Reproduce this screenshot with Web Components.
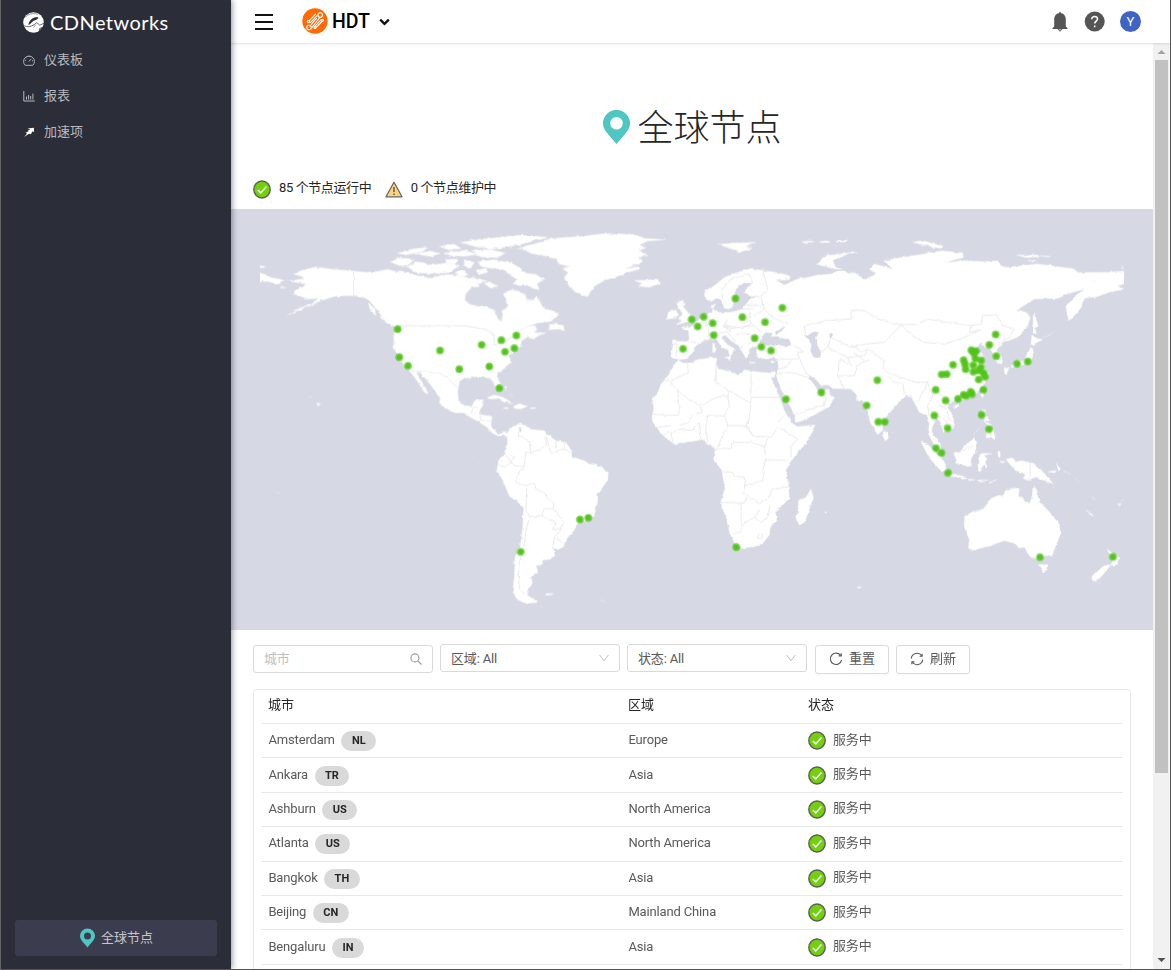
<!DOCTYPE html>
<html lang="zh-CN">
<head>
<meta charset="utf-8">
<title>全球节点</title>
<style>
html,body{margin:0;height:100%;overflow:hidden;background:#fff}
body{font:13px/20px Roboto,"Noto Sans CJK SC",sans-serif;color:#595959}
</style>
</head>
<body>
<cdn-app></cdn-app>
<script>
const define = (name, html, setup) => {
  const t = document.createElement('template');
  t.innerHTML = html;
  customElements.define(name, class extends HTMLElement {
    constructor() {
      super();
      this.attachShadow({mode: 'open'}).append(t.content.cloneNode(true));
    }
    connectedCallback() { if (setup) setup(this, this.shadowRoot); }
  });
};

const icons = {
  dash: '<svg viewBox="0 0 12 12" width="12" height="12" fill="none" stroke="currentColor" stroke-width=".95"><path d="M2.200 11.300A5.400 5.400 0 1 1 9.800 11.300Z"/><path d="M5.800 7.600L8.300 4.900M6 2v1M2 6.400h1M9 6.800h1M3.200 3.600l.7.7"/></svg>',
  chart: '<svg viewBox="0 0 12 12" width="12" height="12" fill="none" stroke="currentColor"><path d="M.8 1v10h11M3.500 9.500v-3M5.600 9.500V5M7.700 9.500V6M9.900 9.500V3.600"/></svg>',
  fast: '<svg viewBox="0 0 12 12" width="12" height="12" fill="#fff"><path d="M4.600 2.400L11 1.800 10.900 6.200 9.400 5.300 7.900 8.300 6.100 7.700 1 10.900 4 7.700 2.600 6.700 5.800 5.300 4.300 4.900 7.200 3.500Z"/></svg>',
  pin: '<svg viewBox="0 0 27 34" width="100%" height="100%" fill="#4ec7c2"><path fill-rule="evenodd" d="M13.500 0A13.300 13.300 0 0 0 0 13.500C0 20 6 25 13.500 34 21 25 27 20 27 13.500A13.300 13.300 0 0 0 13.500 0ZM13.500 7A6.300 6.300 0 1 1 13.500 19.600 6.300 6.300 0 0 1 13.500 7Z"/></svg>',
  ok: '<svg viewBox="0 0 18 19" width="18" height="19"><ellipse cx="9" cy="9.500" rx="8.200" ry="8.500" fill="#72d10c" stroke="#5b5f55" stroke-width="1.400"/><path d="M4.800 10l3 2.900 5.600-6.300" fill="none" stroke="#fff" stroke-width="1.500"/></svg>',
  warn: '<svg viewBox="0 0 18 17" width="18" height="17"><path d="M9 1.200L17 15.800H1Z" fill="#ffd27d" stroke="#666" stroke-width="1.300" stroke-linejoin="round"/><path d="M9 6v5M9 12.500v1.600" stroke="#555" stroke-width="1.400"/></svg>',
  search: '<svg viewBox="0 0 12 12" width="12" height="12" fill="none" stroke="#999" stroke-width="1.100"><circle cx="4.900" cy="4.900" r="4"/><path d="M7.800 7.800L11.500 11.500"/></svg>',
  down: '<svg viewBox="0 0 10 8" width="10" height="8" fill="none" stroke="#bfbfbf"><path d="M.6 1L5 6.800 9.400 1"/></svg>',
  reset: '<svg viewBox="0 0 14 14" width="14" height="14" fill="none" stroke="#555" stroke-width="1.150"><path d="M11.700 3.400A5.700 5.700 0 1 0 12.600 8.200"/><path d="M12.200 1.200v2.600h-2.600"/></svg>',
  reload: '<svg viewBox="0 0 14 14" width="14" height="14" fill="none" stroke="#555" stroke-width="1.150"><path d="M1.300 6.500A5.700 5.700 0 0 1 11.800 4M12.700 7.500A5.700 5.700 0 0 1 2.200 10"/><path d="M12.100 1.700v2.500h-2.500M1.900 12.300v-2.500h2.500"/></svg>'
};

define('ui-icon', '<style>:host{display:block;flex:none}svg{display:block}</style>', (el, root) => {
  if (root.querySelector('svg')) return;
  root.append(document.createRange().createContextualFragment(icons[el.getAttribute('name')]));
});

define('nav-item', `<style>
:host{display:flex;align-items:center;height:36px;padding-left:22px;color:#b9bac0}
ui-icon{width:12px;height:12px;margin-right:9px}
</style><ui-icon></ui-icon><span><slot></slot></span>`, (el, root) => {
  const i = root.querySelector('ui-icon');
  const n = document.createElement('ui-icon');
  n.setAttribute('name', el.getAttribute('icon'));
  i.replaceWith(n);
});

define('side-nav', `<style>
:host{display:flex;flex-direction:column;width:230px;box-sizing:border-box;background:#2b2d38;box-shadow:1px 0 6px rgba(0,21,41,.45);z-index:3}
.brand{display:flex;align-items:center;height:42px;padding:2px 0 0 22px;box-sizing:border-box;gap:6px;color:#fff;font:400 20px/24px Lato,sans-serif;letter-spacing:.45px}
.brand svg{width:21px;height:21px}
.fill{flex:1}
.global{display:flex;align-items:center;justify-content:center;height:36px;margin:0 14px 13px;border-radius:3px;background:#3b3d4f;color:#c5c6cc;gap:6px;padding-left:1px;box-sizing:border-box}
.global ui-icon{width:15px;height:20px}
</style>
<div class="brand"><svg viewBox="0 0 21 21"><circle cx="10.500" cy="10.500" r="10.300" fill="#fff"/><path d="M5.500 13.200C5.800 9 9.300 5.300 14.300 5.100L15.700 6.300C14.400 6.500 14.300 7.700 12.800 8 9.600 8.600 8.400 11.300 5.500 13.200Z" fill="#2b2d38"/><path d="M0 13C4.500 16 9 14.800 13.800 10.600L16.800 13.200 21 11.200" stroke="#2b2d38" stroke-width=".7" fill="none"/><path d="M2.200 5.500C5 1.800 10 .8 15 2.300M12.500 12.800L10.800 15.300" stroke="#2b2d38" stroke-width=".5" fill="none"/><path d="M15.800 16.800L19 14.800 21 15V21H15C15.900 19.500 16.200 18.300 15.800 16.800Z" fill="#2b2d38" opacity=".7"/></svg><span>CDNetworks</span></div>
<nav-item icon="dash">仪表板</nav-item>
<nav-item icon="chart">报表</nav-item>
<nav-item icon="fast">加速项</nav-item>
<div class="fill"></div>
<div class="global"><ui-icon name="pin"></ui-icon><span>全球节点</span></div>`);

define('top-bar', `<style>
:host{display:flex;align-items:center;height:43px;box-sizing:border-box;background:#fff;padding:0 29px 0 24px;box-shadow:0 1px 2px rgba(0,21,41,.13);z-index:2}
svg{display:block;flex:none}
.logo{margin:-1px 0 0 29px}
b{font:500 19.500px/24px Roboto,sans-serif;color:#000;margin:1px 9px 0 4px}
.fill{flex:1}
.help{margin:0 15px 0 16px}
.user{display:flex;align-items:center;justify-content:center;width:21px;height:21px;border-radius:50%;background:#4064c4;color:#fff;font-size:13px}
</style>
<svg width="18" height="16" viewBox="0 0 18 16"><path d="M0 1h18M0 8h18M0 15h18" stroke="#111" stroke-width="1.800"/></svg>
<svg class="logo" width="26" height="26" viewBox="0 0 26 26"><circle cx="13" cy="13" r="12.700" fill="#ff6a05"/><g stroke="#fff" stroke-width="1.100" fill="none" stroke-linecap="round"><path d="M7.200 12.800L13.500 6.200M8.700 14.300L15 7.700M10 19.300L17.500 10M8 18L14.500 10.300M13 18.200L19.200 11.700M14.300 19.300L20.500 13"/><circle cx="18.200" cy="7.100" r="2.300"/><circle cx="7" cy="19.500" r="2.200"/><circle cx="20.500" cy="12.200" r="1"/><circle cx="6.500" cy="13.600" r="1.100"/><circle cx="13" cy="19.500" r="1"/></g></svg>
<b>HDT</b>
<svg width="11" height="8" viewBox="0 0 11 8"><path d="M1.200 1.600L5.500 5.800 9.800 1.600" fill="none" stroke="#111" stroke-width="2.300"/></svg>
<div class="fill"></div>
<svg width="16" height="21" viewBox="0 0 16 21" fill="#555"><path d="M8 .5L9.200 2.200C12.500 2.800 13.800 5.500 13.800 8.500V15.500L15.600 17.200V18H.4V17.200L2.200 15.500V8.500C2.200 5.500 3.500 2.800 6.800 2.200ZM5.500 18h5L8 20.800Z"/><circle cx="8" cy="18.700" r=".7" fill="#fff"/></svg>
<svg class="help" width="21" height="21" viewBox="0 0 21 21"><circle cx="10.700" cy="10.500" r="10" fill="#555"/><path d="M7.800 8.300C7.700 4.600 13.700 4.700 13.500 8 13.400 10 10.700 10.200 10.700 12.600M10.700 14.500V16.200" stroke="#fff" stroke-width="1.600" fill="none"/></svg>
<div class="user">Y</div>`);

define('scroll-rail', `<style>
:host{display:flex;flex-direction:column;align-items:center;width:17px;background:#f1f1f1}
.thumb{width:13px;height:713px;background:#c1c1c1}.fill{flex:1}
svg{display:block}
</style>
<svg width="17" height="17"><path d="M4.500 11L8.500 7 12.500 11Z" fill="#a3a3a3"/></svg><div class="thumb"></div><div class="fill"></div>
<svg width="17" height="20"><path d="M4.500 9L8.500 13 12.500 9Z" fill="#505050"/></svg>`);

define('node-summary', `<style>
:host{display:flex;align-items:center;height:20px;padding:0 22px;color:#262626;letter-spacing:-.4px}
span{margin:0 13.500px 3px 8px}
ui-icon{margin-bottom:0}
</style><ui-icon name="ok"></ui-icon><span>85 个节点运行中</span><ui-icon name="warn"></ui-icon><span>0 个节点维护中</span>`);

/* Map coordinates: three units per CSS pixel, origin at the map's top-left corner. */
const pins = [[500,360],[505,444],[531,470],[627,424],[752,407],[811,393],[856,379],[850,417],[822,428],[775,472],[685,480],[805,537],
[1513,268],[1654,296],[1534,324],[1602,339],[1418,323],[1382,331],[1400,352],[1445,342],[1448,378],[1356,419],[1571,387],[1591,413],[1620,424],[1665,570],[1771,550],
[2294,376],[2275,407],[2296,441],[2358,464],[2390,457],[2221,423],[2235,426],[2228,432],[2198,453],[2202,465],[2204,480],[2233,448],[2250,454],[2227,468],[2250,475],[2227,488],[2243,484],[2258,492],[2262,503],[2243,511],[2166,467],[2132,496],[2147,495],[2114,542],[2144,574],[2257,542],[2181,569],[2198,557],[2206,560],[2219,548],[2223,555],[2110,619],[2252,617],[1939,513],[1907,589],[1942,638],[1961,638],
[2150,657],[2274,660],[2115,717],[2131,731],[2151,791],[1516,1014],[2427,1044],[2646,1043],[1047,931],[1072,926],[869,1028]];

define('world-map', `<style>
:host{display:block;height:421px;background:#d6d8e4}
svg{display:block;width:922px;height:421px}
.land{fill:#fff;stroke:#f4f4f6;stroke-width:1.500;stroke-linejoin:round}
.sea{fill:#d6d8e4}
.line{fill:none;stroke:#e8e8ec;stroke-width:2.700;stroke-linejoin:round}
</style>
<svg viewBox="0 0 2766 1263">
<defs><filter id="coast" x="0" y="0" width="2766" height="1263" filterUnits="userSpaceOnUse" color-interpolation-filters="sRGB"><feTurbulence type="fractalNoise" baseFrequency=".06" numOctaves="2" seed="4"/><feDisplacementMap in="SourceGraphic" scale="9" xChannelSelector="R" yChannelSelector="G"/></filter>
<clipPath id="world"><path d="M88 0H2678V1263H88Z"/></clipPath></defs>
<g clip-path="url(#world)"><g filter="url(#coast)">
<g class="land">
<path d="M80 190L103 196 120 206 160 213 145 220 150 226 110 218 95 216 80 223Z M80 170l22 2-3 4-19 0ZM148 233l18 2-3 3-15-3Z"/>
<path d="M185 194L215 183 255 174 300 180 368 186 405 190 440 187 470 181 490 186 530 192 560 200 600 208 640 196 690 200 720 210 740 222 745 232 725 236 712 245 702 262 703 275 715 285 740 292 770 296 790 304 796 318 803 333 812 333 816 318 812 305 822 300 832 290 825 270 820 250 840 243 862 246 880 258 890 275 908 272 915 258 930 285 945 300 972 308 980 320 960 337 920 342 888 352 872 366 890 352 912 350 918 362 908 370 945 372 925 378 905 392 890 382 870 398 872 410 850 425 835 440 838 460 820 478 800 490 798 505 812 530 810 548 797 542 787 518 775 508 740 502 715 508 700 506 685 520 680 545 682 575 700 590 722 594 730 575 757 572 755 590 745 605 748 617 783 622 780 645 782 655 795 670 805 674 820 667 832 678 826 684 818 676 805 682 785 673 768 655 740 636 718 625 700 612 660 608 625 582 628 568 600 530 570 492 555 488 570 515 592 555 580 550 558 515 535 485 515 462 500 440 488 415 488 380 495 355 470 340 455 325 440 305 420 280 400 265 368 260 335 260 310 262 270 275 240 290 200 305 168 320 200 300 245 283 262 268 235 270 220 266 190 255 190 245 215 235 225 225 175 216 200 212 220 208 200 198Z"/>
<path d="M480 160L500 148 525 148 550 152 530 168 505 170ZM530 172L560 158 600 168 660 160 685 170 655 190 620 194 570 192 545 188ZM500 132L545 120 590 115 575 128 520 138ZM550 135L600 126 625 134 600 142ZM625 112L668 105 690 118 655 124ZM640 132L700 124 740 136 700 142 660 140ZM690 100L740 92 800 86 850 79 905 80 950 86 900 98 860 108 820 115 780 120 730 112ZM720 122L780 122 822 132 800 146 750 144ZM640 152L680 150 672 164 650 166ZM700 152L730 160 718 178 700 170ZM672 190L700 184 710 198 690 204ZM740 158L790 152 840 162 870 178 880 192 915 196 938 212 918 224 925 242 905 238 890 228 865 230 845 222 860 212 840 200 815 180 780 178 750 172ZM735 184L765 178 770 190 745 196ZM760 224L775 218 800 232 780 238ZM700 214L728 206 768 216 745 224Z"/>
<path d="M864 118L905 105 950 95 965 88 1050 82 1120 74 1210 76 1240 88 1300 92 1250 96 1225 108 1245 115 1225 125 1250 140 1225 145 1235 158 1180 180 1225 172 1225 180 1190 190 1150 205 1125 212 1095 228 1080 245 1070 263 1040 255 1015 232 1000 205 1012 190 995 180 1015 172 985 165 975 150 940 140 900 133Z"/>
<path d="M1210 214l30 0 40-4 5 12-30 13-32-4 10-8ZM955 346L975 345 998 350 1000 366 985 360 955 362ZM965 315l15-8 0 15-20 8Z"/>
<path d="M768 566L790 558 815 564 845 582 820 580 800 568 780 570ZM848 592L865 584 888 592 870 600 850 598ZM898 596h14v3h-14ZM818 596h14v3h-14ZM820 535l6 0 2 12ZM835 550l12 14M262 580l5 5-5 4-4-5ZM235 564l8 3M410 280l22 20 2 20-14-12ZM445 320l45 25-8 6-28-18Z"/>
<g transform="translate(0 633)"><path d="M828 40L840 22 868 12 885 18 900 28 940 32 950 45 975 62 1008 68 1022 95 1022 110 1060 122 1075 132 1108 138 1132 158 1130 180 1112 205 1100 222 1100 245 1090 285 1072 298 1040 310 1030 330 1010 352 998 375 985 388 965 385 972 405 955 418 935 420 933 435 915 436 920 455 900 470 905 492 890 508 888 525 922 547 885 550 860 540 845 515 850 470 852 410 868 380 875 320 878 260 835 228 815 180 798 150 803 120 822 100 830 75Z"/><path d="M945 521l22-1-14 6-10-1ZM1108 541l18 4M725 111l4 5M112 458l3 3M138 217l8 3"/></g>
<path d="M1340 455L1355 462 1372 462 1400 452 1440 446 1458 448 1455 465 1462 480 1490 486 1520 498 1532 490 1540 482 1560 486 1590 490 1620 492 1633 490 1630 505 1620 505 1635 540 1650 575 1660 605 1680 638 1698 653 1752 648 1745 668 1720 708 1690 743 1665 783 1672 823 1675 868 1650 893 1633 908 1638 938 1618 951 1615 978 1595 1003 1570 1013 1530 1018 1512 1005 1495 968 1485 923 1468 883 1482 838 1472 783 1448 751 1452 718 1425 703 1415 691 1380 698 1330 705 1300 683 1280 658 1265 638 1263 625 1268 595 1263 570 1285 540 1290 525 1315 495 1320 480Z"/>
<path d="M1740 840L1747 865 1735 900 1722 938 1705 947 1695 930 1702 900 1702 875 1725 865Z"/>
<path d="M1345 452L1370 448 1385 430 1390 415 1405 400 1430 392 1450 390 1460 398 1475 415 1492 425 1497 442 1504 435 1508 422 1514 420 1490 408 1475 390 1472 378 1485 380 1500 395 1515 405 1528 415 1535 430 1545 448 1550 440 1558 435 1557 420 1565 412 1582 412 1578 420 1575 435 1585 447 1605 450 1625 446 1640 452 1643 480 1636 500 1650 540 1668 575 1682 600 1697 640 1730 630 1760 612 1790 595 1812 568 1795 552 1786 540 1778 548 1762 550 1755 535 1740 515 1730 503 1738 500 1755 512 1772 528 1792 528 1805 538 1860 540 1878 560 1880 575 1895 578 1905 590 1910 610 1918 640 1932 665 1942 677 1954 663 1957 640 1970 618 2000 585 2015 570 2025 560 2042 566 2055 590 2065 610 2080 615 2090 622 2095 640 2092 673 2102 693 2115 720 2127 738 2132 730 2127 703 2115 688 2102 668 2105 648 2115 625 2128 638 2138 671 2158 663 2170 650 2165 620 2150 595 2155 582 2180 572 2210 570 2235 555 2255 535 2265 515 2270 495 2260 470 2245 455 2260 440 2250 430 2240 432 2235 418 2250 400 2262 415 2275 415 2290 440 2300 464 2315 460 2312 440 2295 425 2315 400 2330 395 2360 385 2390 350 2398 325 2390 312 2360 302 2410 270 2480 268 2510 255 2560 240 2525 270 2505 290 2512 335 2530 320 2555 290 2560 268 2600 262 2630 250 2675 242 2660 230 2690 222 2690 186 2610 190 2540 190 2530 180 2460 170 2420 165 2370 170 2330 175 2310 170 2300 155 2260 158 2200 155 2140 160 2198 145 2195 132 2130 125 2080 135 2010 145 1960 155 1985 180 1930 165 1915 180 1935 195 1900 212 1870 190 1860 192 1830 185 1800 195 1760 198 1730 205 1700 210 1660 228 1635 215 1675 212 1678 202 1650 192 1600 185 1560 178 1520 190 1480 205 1450 230 1422 245 1425 270 1440 278 1460 265 1472 275 1480 298 1495 300 1505 290 1508 265 1515 240 1540 220 1565 222 1550 235 1540 250 1560 262 1590 262 1560 268 1545 285 1535 300 1500 310 1460 310 1445 300 1455 285 1440 290 1445 310 1425 315 1405 330 1390 350 1350 355 1372 365 1375 390 1365 398 1325 395 1320 430 1320 445 1335 450Z"/>
<path d="M1335 280l20-6 8 12-8 6 14 15 10 18 2 14-44 6 16-12-12-4 14-12-8-14ZM1312 309l25-6 6 12-10 12-26 4ZM1445 403l6 0 2 26-8 2ZM1480 445l20-3-4 12ZM1555 458l20 3-2 2-18-2ZM1617 460l16-3-8 8Z"/>
<path d="M1462 106l50-4 62-2-30 14 20 4-38 10-28-10ZM1755 165l30-25 75-10-55 24 8 20 20 6-22 0ZM1710 98l30-2 10 3-30 2ZM1765 98l25-2 8 4-24 2ZM1815 96l35-3-6 5-26 2ZM2045 100l30-6 25 8 20 6 20 4-12 6-40-8ZM2360 138l60 0 10 4-45 4ZM2430 140l28 2-14 2ZM2390 154l25 0-10 4ZM1860 129l20-1-20 6ZM2575 215l20 0 0 4ZM2670 174l10-2v5Z"/>
<path d="M2407 312l8 18 7 22-9 6 3 18-8-6-2-28ZM2402 378l12 8 18 6-14 8-10 10-8-5ZM2400 414l6 26-8 18-30 12-30 6 14-14 26-8 14-22ZM2320 476l14 2-8 20-6-6ZM2252 545l7 8-4 15-6-10ZM2167 590l16-6-4 10-8 4ZM2253 600l10 2 0 20 16 14-14-2-12-8ZM2268 662l15-4 10 15-2 20-10-10-16 4ZM2248 655l-22 22M2432 388l32-14M2262 636l20 12-6 10Z"/>
<g transform="translate(1380 633)"><path d="M576 32l14 6 2 18-10 6-5-12ZM690 66L710 72 735 100 760 125 768 155 752 155 725 125 705 95ZM768 160l30 4 30 8-4 5-50-9ZM788 98L805 94 830 70 850 53 858 70 852 100 840 118 838 140 800 132ZM863 106l10-6 30 0-24 6 10 12-6 4 4 24-10-14-8 22-8 0 4-26ZM832 177l20 2-18 3ZM860 180l30 0-28 5ZM892 190l25-12-20 15ZM922 92l6 8-2 14-5-10ZM925 124l18 0-8 5ZM945 118l20-6 8 14 20-4 35 8 32 28 10 16 18 18-32-12-24-10-14 12-22-6 8-14-30-10-14-16ZM1072 155l24-4-6 8ZM1095 132l14 14-6 8M1118 152l20 12M1150 172l20 22M1185 270l22 16-4 2ZM1203 228l6 14M1280 252l10-2-3 8ZM1290 242l8-4"/>
<path d="M820 290L845 275 880 265 900 235 925 225 935 230 945 208 960 205 985 208 982 228 1015 250 1022 235 1027 195 1040 220 1050 250 1075 275 1085 290 1105 310 1108 345 1095 375 1083 408 1055 410 1045 418 1020 412 1010 400 1000 380 985 385 972 370 940 362 895 378 850 390 832 385 835 360 820 320ZM1045 434l26 0-2 15-12 8ZM1247 385l20 18 20 10-16 26-12-2 6-15-6-16ZM1247 434l12 2-24 28-12 16-20 0 0-12Z"/><path d="M498 501h14l-8 5ZM402 275h4v4h-4Z"/></g>
</g>
<g class="sea"><path d="M1585 402L1592 382 1608 370 1625 372 1620 382 1640 382 1675 395 1682 408 1665 412 1635 406 1610 410ZM1630 370L1665 350 1650 368 1640 378ZM1725 380L1750 367 1765 370 1752 385 1760 410 1770 430 1768 445 1748 445 1738 425 1742 408ZM1795 375l12-4-4 14-7 2Z"/><path d="M864 655l6 0 2 14-6 0Z"/></g>
<g class="line">
<path d="M368 186V260L400 268M495 350H700L750 358 780 368 790 385 788 408 810 400 840 388 860 370 875 360M535 485L600 490 625 492 655 510 675 532M720 612L728 595 745 592M745 608L750 635 782 636"/>
<path d="M865 660L862 680 895 695 900 733 885 728 880 770 855 775 822 735M803 765L825 775 850 745 835 735M880 770L860 795 855 820 885 830 910 822 915 840 945 855 950 870 968 880 968 900 940 898 932 920 895 922 885 905 887 835M895 922L885 965 878 1020 865 1060 862 1100 865 1140 880 1155M932 920L975 940 965 960 990 960 998 940 968 900M990 960L970 985 965 1018M970 985L1000 1005M945 680L960 733 1000 722 1020 730M900 733L945 710 945 680M975 695L970 720M1000 697L1000 722"/>
<path d="M1370 462L1372 490 1320 515 1320 525 1345 550 1405 590 1415 588 1455 565 1490 560 1495 545 1450 515 1458 490M1455 515L1455 465M1495 545L1560 582V490M1562 565H1655M1560 582L1555 625 1545 650 1565 680M1340 545L1345 618H1300L1265 615M1405 590L1415 610 1390 615 1370 640 1345 650M1490 560L1495 590 1480 620 1430 620M1325 705L1320 670 1350 660 1380 665 1405 640 1410 690M1430 620L1425 650 1430 700M1480 620L1490 650 1470 690 1460 715M1490 650L1550 650 1565 680 1620 685 1640 655M1452 720L1500 718 1508 700 1560 700 1600 712 1610 690M1600 712L1605 752 1595 785M1605 752L1665 755M1640 640L1660 620M1645 655L1700 690 1680 712V745M1472 788L1505 790 1510 803 1540 803 1542 830 1595 815 1600 785M1468 880L1540 882 1550 860 1585 885 1610 868 1625 840 1675 833M1530 885V970L1505 972M1530 950L1570 925 1590 900M1570 925L1590 940 1612 920 1616 890M1595 975l-12 0-4 12 12 2ZM1540 803L1542 860M1315 515H1285M1280 655l40-5M1300 680l15-15"/>
<path d="M1325 405L1338 402 1335 440M1370 395L1395 402M1422 395L1435 375 1430 352 1410 338M1435 375L1480 370 1500 365 1480 350 1490 330M1430 352L1415 330M1480 350L1530 355 1560 345 1555 310M1475 350L1500 358 1570 350 1590 370M1490 370L1515 400M1515 375L1560 372 1570 395 1550 408M1530 410L1532 430M1475 272L1475 240 1500 210 1555 195 1565 222M1595 180L1610 240 1590 262 1600 300 1570 320M1600 300L1625 325 1670 345M1540 285L1590 290M1535 300L1570 300M1568 420l-15 5M1690 410L1720 428 1700 430 1705 450 1640 450M1705 450L1725 490 1735 502M1640 480L1665 475 1685 450M1642 495L1680 490 1730 505M1695 615L1735 600 1780 590 1785 565 1770 560M1725 385L1720 350 1780 335 1860 330 1860 303 1900 305 1940 330 2010 348 1985 375 1960 400 1905 405 1860 415 1830 400 1800 385 1790 415 1768 430M1790 415L1850 445 1860 470 1828 450 1820 500 1840 540M1850 445L1900 440 1910 420 1960 455 1955 480 1980 495 2055 520 2090 520 2105 560 2120 550 2150 570M1820 500L1870 500 1880 470 1915 450M2010 348L2060 345 2090 330 2150 340 2220 350 2215 370 2250 362 2190 390 2140 405 2080 400 2045 380 2010 348M2220 350L2250 345 2255 318 2300 320 2315 350 2350 360 2335 385 2300 405M2015 520L2020 555M2090 520L2060 580M2105 560L2090 590 2095 620M2120 585L2145 600 2160 640M2095 600L2125 620 2150 640 2130 655M1970 500L1990 520 2010 522M1860 407l30 20 20-5M1870 430l30 25M2180 734L2200 722 2225 710M2397 763V814"/>
</g></g></g>
<g id="pins"></g>
</svg>`, (el, root) => {
  root.querySelector('#pins').innerHTML = pins.map(([x, y]) =>
    `<circle cx="${x}" cy="${y + .5}" r="13" fill="#52c41a" opacity=".35"/><circle cx="${x}" cy="${y + .5}" r="11" fill="#52c41a" opacity=".6"/><circle cx="${x}" cy="${y + .5}" r="7.500" fill="#52c41a"/>`).join('');
});

define('filter-bar', `<style>
:host{display:flex;align-items:flex-start;padding:14px 22px 0;height:45px}
.f{display:flex;align-items:center;justify-content:space-between;box-sizing:border-box;width:180px;height:28px;border:1px solid #d9d9d9;border-radius:3px;padding:0 10px;margin-right:7px;letter-spacing:-.15px}
.f.search{margin-top:1px;color:#bfbfbf}
.btn{display:flex;align-items:center;gap:6px;box-sizing:border-box;width:74px;height:29px;margin:1px 7px 0 0;padding-left:13px;border:1px solid #d9d9d9;border-radius:3px;box-shadow:0 2px 0 rgba(0,0,0,.016)}
.btn.first{margin-left:1px}
.btn ui-icon,.btn .txt{margin-bottom:2px}
.f .txt{margin-top:1px}
.search .txt{margin:0 0 1px}
</style>
<div class="f search"><span class="txt">城市</span><ui-icon name="search"></ui-icon></div>
<div class="f"><span class="txt">区域: All</span><ui-icon name="down"></ui-icon></div>
<div class="f"><span class="txt">状态: All</span><ui-icon name="down"></ui-icon></div>
<div class="btn first"><ui-icon name="reset"></ui-icon><span class="txt">重置</span></div>
<div class="btn"><ui-icon name="reload"></ui-icon><span class="txt">刷新</span></div>`);

define('node-row', `<style>
:host{display:grid;grid-template-columns:360px 180px 1fr;align-items:center;height:34.400px;box-sizing:border-box;border-bottom:1px solid #e8e8e8;padding-left:7px;letter-spacing:-.15px}
.c{display:flex;align-items:center}
.city{margin:0 0 1px .4px}
i{font:700 11px/20px Roboto,sans-serif;letter-spacing:0;color:#262626;background:#d9d9d9;border-radius:10px;padding:0 10.500px;height:20px;margin:1px 0 0 6.500px}
ui-icon{margin:0 7px 0 0}
.t{margin:0 0 1px .4px}
.s{margin-bottom:2px}
</style><div class="c"><span class="city"><slot></slot></span><i></i></div><span class="t"></span><div class="c"><ui-icon name="ok"></ui-icon><span class="s">服务中</span></div>`, (el, root) => {
  root.querySelector('i').textContent = el.getAttribute('code');
  root.querySelector('.t').textContent = el.getAttribute('region');
});

define('node-table', `<style>
:host{display:block;box-sizing:border-box;margin:0 22px;height:400px;border:1px solid #e8e8e8;border-radius:4px;padding:0 7px}
.head{display:grid;grid-template-columns:360px 180px 1fr;height:34px;box-sizing:border-box;border-bottom:1px solid #e8e8e8;padding:5px 0 0 7px;color:#262626}
</style><div class="head"><span>城市</span><span>区域</span><span>状态</span></div><slot></slot>`);

define('cdn-app', `<style>
:host{display:flex;height:970px;width:1171px;box-sizing:border-box;border:solid #555;border-width:0 1px 1px;border-left-color:#666;overflow:hidden;background:#fff}
.main{flex:1;display:flex;flex-direction:column;min-width:0}
.body{display:flex;flex:1;min-height:0}
.page{width:922px;overflow:hidden}
h1{display:flex;justify-content:center;align-items:center;gap:7px;margin:0;height:136px;padding:32px 0 0 1px;box-sizing:border-box;font:300 36px/50px Roboto,"Noto Sans CJK SC",sans-serif;color:#262626}
h1 ui-icon{width:27px;height:34px;margin-bottom:1px}
h1 span{margin-top:4px}
node-summary{padding-bottom:10px}
</style>
<side-nav></side-nav>
<div class="main"><top-bar></top-bar><div class="body"><div class="page">
<h1><ui-icon name="pin"></ui-icon><span>全球节点</span></h1>
<node-summary></node-summary>
<world-map></world-map>
<filter-bar></filter-bar>
<node-table>
<node-row code="NL" region="Europe">Amsterdam</node-row>
<node-row code="TR" region="Asia">Ankara</node-row>
<node-row code="US" region="North America">Ashburn</node-row>
<node-row code="US" region="North America">Atlanta</node-row>
<node-row code="TH" region="Asia">Bangkok</node-row>
<node-row code="CN" region="Mainland China">Beijing</node-row>
<node-row code="IN" region="Asia">Bengaluru</node-row>
</node-table>
</div><scroll-rail></scroll-rail></div></div>`);
</script>
</body>
</html>
